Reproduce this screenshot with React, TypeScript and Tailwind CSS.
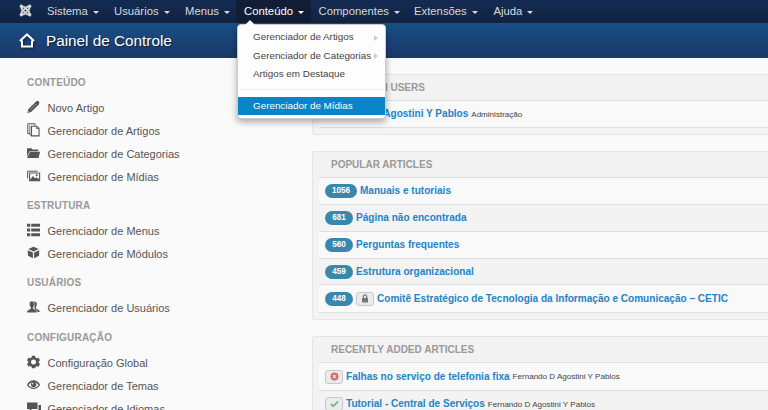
import React from "react";
import { FaJoomla } from "react-icons/fa";

type IconName = "pencil" | "copy" | "folder" | "images" | "list" | "cube" | "users" | "cog" | "eye" | "comments";

function Icon({ name }: { name: IconName }) {
  return (
    <svg width="14" height="14" viewBox="0 0 14 14" fill="currentColor">
      {name === "users" && (
        <>
          <path d="M6.800 1.500Q9.800.9 9.900 4 9.900 6 8.900 7.300V8.500L12.500 10.500V12H8z" />
          <path d="M4.800 1Q7.500 1 7.400 4.200 7.300 6 6.300 7.300V8.600L10 10.800V12.800H0V10.800L3.600 8.600V7.300Q2.300 6 2.300 4 2.300 1 4.800 1z" stroke="#fafafa" strokeWidth=".5" />
        </>
      )}
      {name === "eye" && (
        <>
          <path d="M.6 7Q3.200 3.300 6.500 3.300T12.400 7Q9.800 10.500 6.500 10.500T.6 7z" fill="none" stroke="currentColor" strokeWidth="1.200" />
          <path d="M.6 6.500Q3.200 2.800 6.500 2.800T12.400 6.500" fill="none" stroke="currentColor" strokeWidth="1.200" />
          <circle cx="6.600" cy="6.600" r="2.700" />
          <circle cx="5.700" cy="5.700" r=".8" fill="#fafafa" />
        </>
      )}
      {name === "pencil" && (
        <>
          <path d="M0.3 13 1.3 9.2 9 1.5Q10.3.2 11.7 1.5T11.8 4.4L4.1 12Z" />
          <path d="M3.300 9.900 9.200 4" stroke="#bbb" strokeWidth=".7" />
          <path d="m1.2 11.1 1 1" stroke="#fafafa" strokeWidth=".6" />
        </>
      )}
      {name === "copy" && (
        <g fill="none" stroke="currentColor">
          <path d="M3 10.5H.8V.8H8v2" />
          <path d="M5 12H2.8V2.4" strokeWidth=".8" />
          <path d="M4.5 3.2h5.2l2.3 2v7.7H4.5z" fill="#fafafa" strokeWidth="1.1" />
          <path d="M9.5 3.2v2.3H12" strokeWidth=".8" />
        </g>
      )}
      {name === "folder" && (
        <>
          <path d="M0 2.200h4.500l1 1.300h5.800v1.700H2.600L0 10.500z" />
          <path d="M3 5.800H13l-1.400 6.200H0z" />
        </>
      )}
      {name === "images" && (
        <>
          <path d="M.6 9.3V2.2h10" fill="none" stroke="currentColor" strokeWidth="1" />
          <path d="M2.6 4h10v7.6h-10z" fill="none" stroke="currentColor" strokeWidth="1.1" />
          <path d="m3 11 2.8-4 2.4 2.5 1.4-1.3 2.8 2.3V11z" />
          <circle cx="9.7" cy="6.2" r="1" />
        </>
      )}
      {name === "list" && <path d="M0 .8h3.200v3H0zM4.200.8H13v3H4.200zM0 5.500h3.200v3H0zM4.200 5.500H13v3H4.200zM0 10.200h3.200v3H0zM4.200 10.200H13v3H4.200z" />}
      {name === "cube" && <path d="m6.500.8 5.200 2.300-5.200 2.300-5.200-2.300zM.7 4.300 5.900 6.500v5.800L1 9.800zM12.300 4.300 7.100 6.500v5.800L12 9.800z" />}
      {name === "cog" && (
        <>
          <path d="M5 .8h3l.5 1.700 1.200.7 1.800-.5 1.500 2.600L11.800 6.600v1.200l1.200 1.300-1.500 2.600-1.800-.5-1.200.7L8 13.300H5l-.5-1.500-1.200-.7-1.800.5L0 9.100l1.200-1.300V6.600L0 5.300l1.500-2.600 1.800.5 1.200-.7z" />
          <circle cx="6.500" cy="7" r="2.500" fill="#fafafa" />
        </>
      )}
      {name === "comments" && (
        <>
          <path d="M0 1.500h10.500v6.500H5L2.500 10.400V8H0z" />
          <path d="M11.500 4H14v6.300h-1.500v2.500L10 10.300H6.500L8 9h3.500z" />
        </>
      )}
    </svg>
  );
}

const sections: { title: string; space: string; items: { icon: IconName; label: string }[] }[] = [
  {
    title: "CONTEÚDO", space: "mb-[3px]",
    items: [
      { icon: "pencil", label: "Novo Artigo" },
      { icon: "copy", label: "Gerenciador de Artigos" },
      { icon: "folder", label: "Gerenciador de Categorias" },
      { icon: "images", label: "Gerenciador de Mídias" },
    ],
  },
  {
    title: "ESTRUTURA", space: "mb-[3px]",
    items: [
      { icon: "list", label: "Gerenciador de Menus" },
      { icon: "cube", label: "Gerenciador de Módulos" },
    ],
  },
  { title: "USUÁRIOS", space: "mb-1", items: [{ icon: "users", label: "Gerenciador de Usuários" }] },
  {
    title: "CONFIGURAÇÃO", space: "",
    items: [
      { icon: "cog", label: "Configuração Global" },
      { icon: "eye", label: "Gerenciador de Temas" },
      { icon: "comments", label: "Gerenciador de Idiomas" },
    ],
  },
];

const nav = [
  { label: "Sistema", width: "w-[67px]" },
  { label: "Usuários", width: "w-[71px]" },
  { label: "Menus", width: "w-[59px]" },
  { label: "Conteúdo", width: "w-[74.500px]", active: true },
  { label: "Componentes", width: "w-[95.500px]" },
  { label: "Extensões", width: "w-[79.500px]" },
  { label: "Ajuda", width: "w-[60px]" },
];

function Caret() {
  return <span className="mt-0.5 ml-[5px] border-x-[3px] border-t-[3px] border-x-transparent border-t-current" />;
}

function Panel({ title, className, children }: { title: string; className: string; children: React.ReactNode }) {
  return (
    <section className={`rounded-l-[3px] border border-r-0 border-[#e5e5e5] bg-[#f3f3f3] pl-1.5 ${className}`}>
      <h2 className="flex h-[26px] items-center border-b border-[#dfdfdf] pl-3 text-[10px] font-bold text-[#999]">{title}</h2>
      {children}
    </section>
  );
}

function Row({ children, className }: { children: React.ReactNode; className: string }) {
  return <div className={`flex items-center border-b border-[#dfdfdf] pl-1.5 whitespace-nowrap ${className}`}>{children}</div>;
}

function Title({ children }: { children: React.ReactNode }) {
  return <a className="text-[10.050px] font-bold text-[#2384c6]">{children}</a>;
}

function Note({ children }: { children: React.ReactNode }) {
  return <small className="ml-[3px] pt-0.5 text-[8.050px] text-[#444]">{children}</small>;
}

function Tag({ children }: { children: React.ReactNode }) {
  return (
    <span className="mr-[3px] flex h-[14px] w-[18px] shrink-0 items-center justify-center rounded-[3px] border border-[#c8c8c8] bg-[#ebebeb]">
      {children}
    </span>
  );
}

const popular = [
  { hits: "1056", label: "Manuais e tutoriais", badge: "w-8", row: "h-[27px] bg-[#f9f9f9]" },
  { hits: "681", label: "Página não encontrada", badge: "w-7", row: "h-[27px]" },
  { hits: "560", label: "Perguntas frequentes", badge: "w-7", row: "h-[27px] bg-[#f9f9f9]" },
  { hits: "459", label: "Estrutura organizacional", badge: "w-7", row: "h-[26px]" },
  { hits: "448", label: "Comitê Estratégico de Tecnologia da Informação e Comunicação – CETIC", badge: "w-7", row: "h-7 bg-[#f9f9f9]", locked: true },
];

export default function App() {
  return (
    <div className="relative flex h-[410px] w-[768px] flex-col overflow-hidden bg-[#fafafa] font-['Liberation_Sans',Arial,sans-serif]">
      <nav className="flex h-[23px] shrink-0 items-stretch bg-linear-to-b from-[#142b52] to-[#12233f] text-[11.300px] text-[#d5d9df]">
        <div className="flex w-[39px] items-center pb-0.5 pl-[19px] text-[#dcdcdc]"><FaJoomla size={13} stroke="currentColor" strokeWidth={18} /></div>
        {nav.map((n) => (
          <div key={n.label} className={`flex items-center pb-px pl-2 whitespace-nowrap ${n.width} ${n.active ? "bg-[#101d35] text-white" : ""}`}>
            {n.label}<Caret />
          </div>
        ))}
      </nav>
      <header className="flex h-[35px] shrink-0 items-center bg-linear-to-b from-[#184f86] to-[#1a3867] pl-[19px] text-white">
        <svg width="17" height="15" viewBox="0 0 17 15" fill="none" stroke="white" strokeWidth="2" className="drop-shadow-[1px_1px_1px_#0007]">
          <path d="M.9 8 8 1.400 15.100 8M3 7.500V13.500h10V7.500" />
        </svg>
        <h1 className="ml-[10px] pt-px text-[15.300px] [text-shadow:1px_1px_1px_#0007]">Painel de Controle</h1>
      </header>
      <main className="flex min-h-0 flex-1">
        <aside className="w-[312px] shrink-0 pt-[11px] pl-[27px]">
          {sections.map((s) => (
            <section key={s.title} className={s.space}>
              <h2 className="flex h-7 items-center pb-0.5 text-[10px] font-bold tracking-[0.200px] text-[#999]">{s.title}</h2>
              {s.items.map((i) => (
                <div key={i.label} className="flex h-[23px] items-center text-[11px] text-[#555]">
                  <span className="flex w-[20.500px] pb-[3px]"><Icon name={i.icon} /></span>
                  <span className="whitespace-nowrap">{i.label}</span>
                </div>
              ))}
            </section>
          ))}
        </aside>
        <div className="min-w-0 flex-1 pt-4">
          <Panel title="LOGGED-IN USERS" className="mb-4 h-[61px]">
            <Row className="h-[27px] bg-[#f9f9f9]">
              <Title>Fernando D Agostini Y Pablos</Title>
              <Note>Administração</Note>
            </Row>
          </Panel>
          <Panel title="POPULAR ARTICLES" className="mb-4 h-[169px]">
            {popular.map((p) => (
              <Row key={p.hits} className={p.row}>
                <span className={`mr-[3px] flex h-[14px] shrink-0 items-center justify-center rounded-full bg-[#3a87ad] pt-px text-[8.200px] font-bold text-white ${p.badge}`}>{p.hits}</span>
                {p.locked && (
                  <Tag><svg width="8" height="9" viewBox="0 0 8 9"><path d="M1 4h6v4.500H1z" fill="#777" /><path d="M2.300 4V2.500a1.700 1.700 0 0 1 3.400 0V4" fill="none" stroke="#777" strokeWidth="1.200" /></svg></Tag>
                )}
                <Title>{p.label}</Title>
              </Row>
            ))}
          </Panel>
          <Panel title="RECENTLY ADDED ARTICLES" className="h-[100px]">
            <Row className="h-7 bg-[#f9f9f9]">
              <Tag><svg width="9" height="9" viewBox="0 0 9 9"><circle cx="4.500" cy="4.500" r="4" fill="#d2706e" /><path d="m3 3 3 3m0-3L3 6" stroke="#f4dddd" strokeWidth="1.100" /></svg></Tag>
              <Title>Falhas no serviço de telefonia fixa</Title>
              <Note>Fernando D Agostini Y Pablos</Note>
            </Row>
            <Row className="h-[27px]">
              <Tag><svg width="9" height="8" viewBox="0 0 9 8"><path d="m1 4 2.300 2.300L8 1.300" fill="none" stroke="#78b47b" strokeWidth="1.800" /></svg></Tag>
              <Title>Tutorial - Central de Serviços</Title>
              <Note>Fernando D Agostini Y Pablos</Note>
            </Row>
          </Panel>
        </div>
      </main>
      <div className="absolute top-[24px] left-[237px] h-[95px] w-[149px] rounded-[4px] border border-[#ccc] bg-[#fdfdfd] pt-[3.500px] text-[9.850px] text-[#444] shadow-[0_3px_7px_#0005]">
        <span className="absolute -top-[5px] left-[7px] border-x-[5px] border-b-[5px] border-x-transparent border-b-white" />
        {["Gerenciador de Artigos", "Gerenciador de Categorias", "Artigos em Destaque"].map((label, i) => (
          <div key={label} className="flex h-[18.500px] items-center justify-between pr-[7px] pl-[15px] whitespace-nowrap">
            {label}
            {i < 2 && <span className="border-y-[3px] border-l-[4px] border-y-transparent border-l-[#ccc]" />}
          </div>
        ))}
        <hr className="mx-0.5 mt-[5px] mb-[6.500px] border-[#ebebeb]" />
        <div className="flex h-[18px] items-center bg-[#0785c7] pt-px pl-[15px] text-white">Gerenciador de Mídias</div>
      </div>
    </div>
  );
}
